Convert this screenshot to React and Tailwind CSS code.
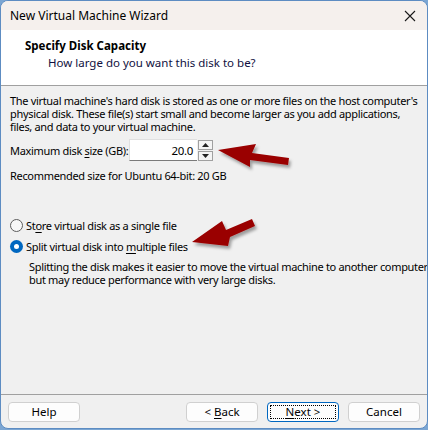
import React from "react";

const font = { fontFamily: '"Noto Sans", "Open Sans", sans-serif' };

function Radio({ checked }) {
  return checked ? (
    <span className="w-[13px] h-[13px] rounded-full bg-[#0067c0] flex items-center justify-center shrink-0">
      <span className="w-[5px] h-[5px] rounded-full bg-white" />
    </span>
  ) : (
    <span className="w-[13px] h-[13px] rounded-full border border-[#5c5c5c] bg-[#f7f7f7] shrink-0" />
  );
}

function Button({ children, focused }) {
  return (
    <button
      className={`w-[72px] h-[20px] rounded-[4px] text-[11.5px] leading-none flex items-center justify-center whitespace-pre ${
        focused ? "border border-[#0067c0] bg-[#fdfdfd]" : "border border-[#d0d0d0] bg-[#fdfdfd]"
      }`}
    >
      {focused ? (
        <span className="w-[66px] h-[14px] border border-dotted border-black flex items-center justify-center">
          {children}
        </span>
      ) : (
        children
      )}
    </button>
  );
}

function Arrows() {
  return (
    <svg className="absolute inset-0 pointer-events-none" width="428" height="430">
      <defs>
        <filter id="sh" x="-20%" y="-20%" width="140%" height="160%">
          <feDropShadow dx="2" dy="3" stdDeviation="1.5" floodColor="#000" floodOpacity="0.35" />
        </filter>
      </defs>
      <g fill="#9a0303" filter="url(#sh)">
        <polygon points="218,150 256,144 252,153 289,158 288,165 250,160 250,167" />
        <polygon points="192,242 222,221 226,230 252,219 255,226 230,237 228,246" />
      </g>
    </svg>
  );
}

export default function App() {
  return (
    <div className="w-[428px] h-[430px] bg-[#7ba6d3] relative overflow-hidden text-black" style={font}>
      <div className="w-[428px] h-[429px] rounded-[8px] border border-[#5d8cc2] bg-[#f0f0f0] flex flex-col overflow-hidden">
        {/* Title bar */}
        <div className="h-[29px] bg-[#f5f0ed] flex items-center justify-between pl-[9px] pr-[10px] shrink-0">
          <span className="text-[12px]">New Virtual Machine Wizard</span>
          <svg width="12" height="12" viewBox="0 0 12 12" className="mr-[1px]">
            <path d="M1 1L11 11M11 1L1 11" stroke="#1a1a1a" strokeWidth="1.1" />
          </svg>
        </div>

        {/* Header */}
        <div className="h-[56px] bg-white border-b border-[#a0a0a0] pl-[24px] pt-[7px] shrink-0 text-[11.5px]">
          <div className="font-bold leading-[17px]">Specify Disk Capacity</div>
          <div className="leading-[17px] pl-[23px] text-[#101040]">How large do you want this disk to be?</div>
        </div>

        {/* Body */}
        <div className="flex-1 px-[9px] pt-[8px] text-[11px] tracking-[-0.32px] leading-[13px] flex flex-col whitespace-nowrap">
          <p>
            The virtual machine's hard disk is stored as one or more files on the host computer's
            <br />
            physical disk. These file(s) start small and become larger as you add applications,
            <br />
            files, and data to your virtual machine.
          </p>

          <div className="flex items-center mt-[6px] h-[22px]">
            <span className="w-[119px]">
              Maximum disk <u className="underline-offset-2">s</u>ize (GB):
            </span>
            <div className="w-[68px] h-[22px] bg-white border-b border-[#7a7a7a] border-t border-t-[#e0e0e0] border-l border-l-[#e0e0e0] flex items-center justify-end pr-[4px] text-[11.5px]">
              20.0
            </div>
            <div className="ml-[1px] flex flex-col gap-[1px]">
              <span className="w-[15px] h-[10px] border border-[#a0a0a0] bg-[#f4f4f4] flex items-center justify-center">
                <svg width="7" height="4" viewBox="0 0 7 4"><path d="M0 4L3.5 0L7 4Z" fill="#222" /></svg>
              </span>
              <span className="w-[15px] h-[10px] border border-[#a0a0a0] bg-[#f4f4f4] flex items-center justify-center">
                <svg width="7" height="4" viewBox="0 0 7 4"><path d="M0 0L3.5 4L7 0Z" fill="#222" /></svg>
              </span>
            </div>
          </div>

          <p className="mt-[8px]">Recommended size for Ubuntu 64-bit: 20 GB</p>

          <div className="mt-[37px] flex flex-col gap-[8px]">
            <label className="flex items-center gap-[3px]">
              <Radio />
              <span>
                St<u className="underline-offset-2">o</u>re virtual disk as a single file
              </span>
            </label>
            <label className="flex items-center gap-[3px]">
              <Radio checked />
              <span>
                Split virtual disk into <u className="underline-offset-2">m</u>ultiple files
              </span>
            </label>
          </div>
          <p className="mt-[7px] pl-[19px]">
            Splitting the disk makes it easier to move the virtual machine to another computer
            <br />
            but may reduce performance with very large disks.
          </p>
        </div>

        {/* Footer */}
        <div className="h-[34px] border-t border-[#a0a0a0] flex items-center px-[7px] shrink-0">
          <Button>Help</Button>
          <div className="flex-1" />
          <div className="flex gap-[9px]">
            <Button>
              {"< "}
              <u className="underline-offset-2">B</u>ack
            </Button>
            <Button focused>
              <u className="underline-offset-2">N</u>
              {"ext >"}
            </Button>
            <Button>Cancel</Button>
          </div>
        </div>
      </div>
      <Arrows />
    </div>
  );
}
